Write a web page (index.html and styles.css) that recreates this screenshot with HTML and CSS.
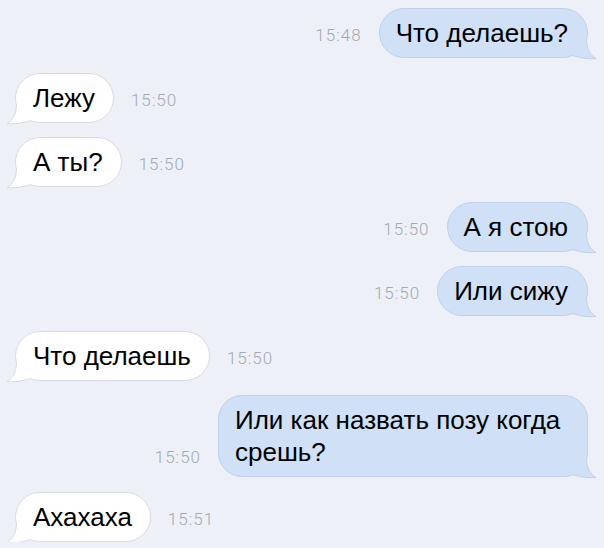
FILE: index.html
```html
<!DOCTYPE html>
<html lang="ru">
<head>
    <meta charset="UTF-8">
    <meta name="viewport" content="width=device-width, initial-scale=1.0">
    <title>Диалог</title>
    <link rel="stylesheet" href="styles.css">
</head>
<body>
    <div class="chat">
        <!-- исходящее -->
        <div class="row out">
            <span class="time">15:48</span>
            <div class="bubble">Что делаешь?<svg class="tail" width="30" height="24" viewBox="0 0 30 24"><path class="fill" d="M11.5,3 C11.5,13 8,19 2,22.5 C9,23.5 17,22 25,19.8 L27,3 Z"/><path class="line" d="M11.5,3 C11.5,13 8,19 2,22.5 C9,23.5 17,22 25,19.8"/></svg></div>
        </div>

        <div class="row in">
            <div class="bubble">Лежу<svg class="tail" width="30" height="24" viewBox="0 0 30 24"><path class="fill" d="M11.5,3 C11.5,13 8,19 2,22.5 C9,23.5 17,22 25,19.8 L27,3 Z"/><path class="line" d="M11.5,3 C11.5,13 8,19 2,22.5 C9,23.5 17,22 25,19.8"/></svg></div>
            <span class="time">15:50</span>
        </div>

        <div class="row in">
            <div class="bubble">А ты?<svg class="tail" width="30" height="24" viewBox="0 0 30 24"><path class="fill" d="M11.5,3 C11.5,13 8,19 2,22.5 C9,23.5 17,22 25,19.8 L27,3 Z"/><path class="line" d="M11.5,3 C11.5,13 8,19 2,22.5 C9,23.5 17,22 25,19.8"/></svg></div>
            <span class="time">15:50</span>
        </div>

        <div class="row out">
            <span class="time">15:50</span>
            <div class="bubble">А я стою<svg class="tail" width="30" height="24" viewBox="0 0 30 24"><path class="fill" d="M11.5,3 C11.5,13 8,19 2,22.5 C9,23.5 17,22 25,19.8 L27,3 Z"/><path class="line" d="M11.5,3 C11.5,13 8,19 2,22.5 C9,23.5 17,22 25,19.8"/></svg></div>
        </div>

        <div class="row out">
            <span class="time">15:50</span>
            <div class="bubble">Или сижу<svg class="tail" width="30" height="24" viewBox="0 0 30 24"><path class="fill" d="M11.5,3 C11.5,13 8,19 2,22.5 C9,23.5 17,22 25,19.8 L27,3 Z"/><path class="line" d="M11.5,3 C11.5,13 8,19 2,22.5 C9,23.5 17,22 25,19.8"/></svg></div>
        </div>

        <div class="row in">
            <div class="bubble">Что делаешь<svg class="tail" width="30" height="24" viewBox="0 0 30 24"><path class="fill" d="M11.5,3 C11.5,13 8,19 2,22.5 C9,23.5 17,22 25,19.8 L27,3 Z"/><path class="line" d="M11.5,3 C11.5,13 8,19 2,22.5 C9,23.5 17,22 25,19.8"/></svg></div>
            <span class="time">15:50</span>
        </div>

        <div class="row out multi">
            <span class="time">15:50</span>
            <div class="bubble">Или как назвать позу когда срешь?<svg class="tail" width="30" height="24" viewBox="0 0 30 24"><path class="fill" d="M11.5,3 C11.5,13 8,19 2,22.5 C9,23.5 17,22 25,19.8 L27,3 Z"/><path class="line" d="M11.5,3 C11.5,13 8,19 2,22.5 C9,23.5 17,22 25,19.8"/></svg></div>
        </div>

        <div class="row in">
            <div class="bubble">Ахахаха<svg class="tail" width="30" height="24" viewBox="0 0 30 24"><path class="fill" d="M11.5,3 C11.5,13 8,19 2,22.5 C9,23.5 17,22 25,19.8 L27,3 Z"/><path class="line" d="M11.5,3 C11.5,13 8,19 2,22.5 C9,23.5 17,22 25,19.8"/></svg></div>
            <span class="time">15:51</span>
        </div>
    </div>
</body>
</html>
```

FILE: styles.css
```css
* {
    margin: 0;
    padding: 0;
    box-sizing: border-box;
}
body {
    background-color: #edf1f7;
    font-family: "Liberation Sans", Arial, sans-serif;
}
.chat {
    display: flex;
    flex-direction: column;
    gap: 14.5px;
    padding: 8px 16px 0 15px;
}
.row {
    display: flex;
    align-items: flex-end;
    gap: 17px;
}
.row.out {
    justify-content: flex-end;
}
.bubble {
    position: relative;
    max-width: 370px;
    padding: 8px 18px 8px 17px;
    border: 1px solid #d7dce3;
    border-radius: 25px;
    background-color: #ffffff;
    color: #000;
    font-size: 26px;
    line-height: 32px;
}
.row.out .bubble {
    background-color: #cfe0f7;
    border-color: #bfd1ea;
    padding: 8px 19px 8px 16px;
}
.row.multi .bubble {
    border-radius: 24px;
}
.time {
    font-family: Roboto, "Liberation Sans", sans-serif;
    font-weight: 300;
    font-size: 17px;
    letter-spacing: 1px;
    line-height: 20px;
    color: #a3a9b1;
    margin-bottom: 13px;
}
.row.multi .time {
    margin-bottom: 10px;
}
/* хвостик пузыря */
.tail {
    position: absolute;
    left: -11px;
    bottom: -3px;
    overflow: visible;
}
.row.out .tail {
    left: auto;
    right: -11px;
    transform: scaleX(-1);
}
.tail .fill {
    fill: #ffffff;
}
.tail .line {
    fill: none;
    stroke: #d7dce3;
    stroke-width: 1;
}
.row.out .tail .fill {
    fill: #cfe0f7;
}
.row.out .tail .line {
    stroke: #bfd1ea;
}
```
